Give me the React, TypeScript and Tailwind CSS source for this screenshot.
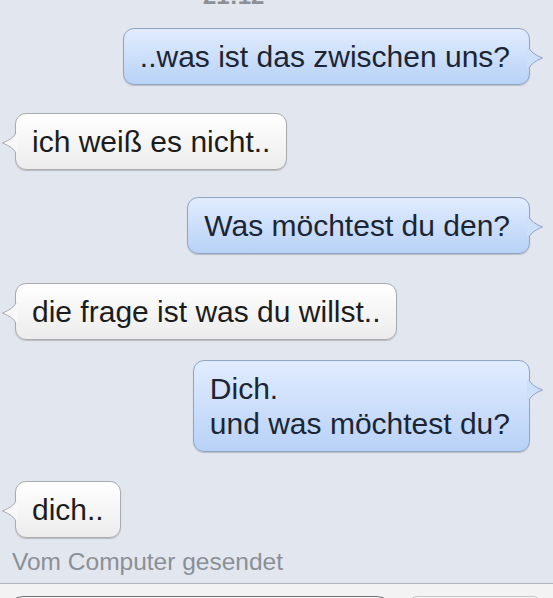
import React from 'react';

type Side = 'left' | 'right';

const Tail: React.FC<{ side: Side }> = ({ side }) => {
  const fill = side === 'right' ? '#cddffa' : '#f8f8f8';
  const stroke = side === 'right' ? '#8ea5c4' : '#a9abae';
  return (
    <svg
      width="17"
      height="20"
      viewBox="0 0 17 20"
      className={side === 'right' ? 'absolute top-[19px] -right-[15px]' : 'absolute top-[19px] -left-[15px] -scale-x-100'}
    >
      <path d="M0 0 L2 0 Q5 6 15.5 10 Q5 14 2 20 L0 20 Z" fill={fill} />
      <path d="M2 0 Q5 6 15.5 10 Q5 14 2 20" fill="none" stroke={stroke} strokeWidth="1" />
    </svg>
  );
};

const Bubble: React.FC<{ side: Side; className?: string; children: React.ReactNode }> = ({ side, className, children }) => {
  const right = side === 'right';
  return (
    <div className={`flex shrink-0 ${right ? 'justify-end pr-[23px]' : 'justify-start pl-[15px]'} ${className ?? ''}`}>
      <div
        className={
          right
            ? 'relative rounded-[11px] border border-[#8ea5c4] bg-gradient-to-b from-[#e1ecfe] to-[#b8d2f7] pl-[16px] pr-[19px] py-[10px] text-[30px] leading-[35px] text-[#1b2535] shadow-[0_1px_1px_rgba(0,0,0,0.18)]'
            : 'relative rounded-[11px] border border-[#a9abae] bg-gradient-to-b from-[#ffffff] to-[#ececec] pl-[16px] pr-[16px] py-[10px] text-[30px] leading-[35px] text-[#1c1c1c] shadow-[0_1px_1px_rgba(0,0,0,0.18)]'
        }
      >
        {children}
        <Tail side={side} />
      </div>
    </div>
  );
};

export default function App() {
  return (
    <div className="w-[553px] h-[598px] overflow-hidden bg-[#e2e6ee] flex flex-col font-['Liberation_Sans',Arial,sans-serif]">
      <div className="h-[28px] shrink-0 overflow-hidden">
        <div className="-mt-[16px] pl-[203px] text-[24px] leading-[23px] font-bold text-[#8c9096]">21:12</div>
      </div>

      <Bubble side="right">..was ist das zwischen uns?</Bubble>
      <Bubble side="left" className="mt-[28px]">ich weiß es nicht..</Bubble>
      <Bubble side="right" className="mt-[27px]">Was möchtest du den?</Bubble>
      <Bubble side="left" className="mt-[29px]">die frage ist was du willst..</Bubble>
      <Bubble side="right" className="mt-[20px]">
        Dich.
        <br />
        und was möchtest du?
      </Bubble>
      <Bubble side="left" className="mt-[29px]">dich..</Bubble>

      <div className="shrink-0 mt-[10px] pl-[12px] text-[24.5px] leading-[28px] text-[#8b8f96]">Vom Computer gesendet</div>

      <div className="shrink-0 mt-[7px] h-[40px] border-t border-[#b3b6bb] bg-[#f3f3f4] flex gap-[16px] px-[7px] pt-[12px]">
        <div className="shrink-0 w-[386px] h-[40px] rounded-[16px] border border-[#6d6f73] bg-white" />
        <div className="shrink-0 w-[132px] h-[40px] rounded-[8px] border border-[#c4c6ca] bg-[#f7f7f7]" />
      </div>
    </div>
  );
}
